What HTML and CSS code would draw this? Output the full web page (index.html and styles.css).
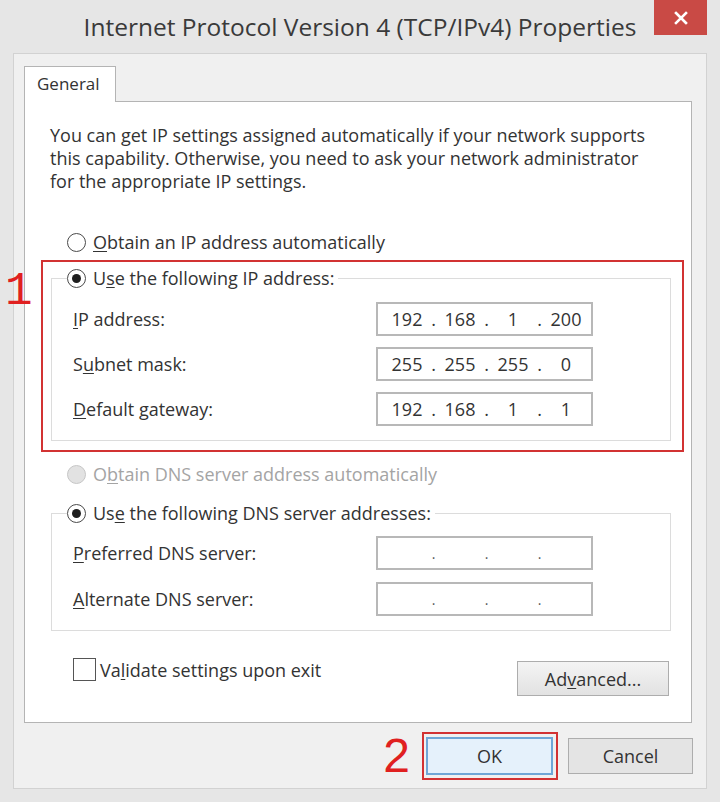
FILE: index.html
```html
<!DOCTYPE html>
<html lang="en">
<head>
    <meta charset="UTF-8">
    <title>Internet Protocol Version 4 (TCP/IPv4) Properties</title>
    <link rel="stylesheet" href="styles.css">
</head>
<body>

    <div class="window">

        <!-- Title bar -->

        <div class="titlebar">
            <span></span>
            <h1 class="title">Internet Protocol Version 4 (TCP/IPv4) Properties</h1>
            <button class="close" aria-label="Close">
                <svg width="14" height="14" viewBox="0 0 14 14">
                    <path d="M2 2 L12 12 M12 2 L2 12" stroke="#fff" stroke-width="2.6" stroke-linecap="square"/>
                </svg>
            </button>
        </div>

        <div class="client">

            <div class="tabs">
                <div class="tab">General</div>
            </div>

            <div class="panel">
                <p class="intro">
                    You can get IP settings assigned automatically if your network supports<br>
                    this capability. Otherwise, you need to ask your network administrator<br>
                    for the appropriate IP settings.
                </p>

                <!-- IP address -->

                <div class="option">
                    <span class="radio"></span>
                    <span><u>O</u>btain an IP address automatically</span>
                </div>

                <div class="highlight ip-box">
                    <span class="step step-one">1</span>
                    <fieldset class="group">
                        <legend class="option">
                            <span class="radio checked"></span>
                            <span>U<u>s</u>e the following IP address:</span>
                        </legend>
                        <div class="field">
                            <span class="label"><u>I</u>P address:</span>
                            <div class="ip-input">
                                <span class="octet">192</span><span class="dot">.</span>
                                <span class="octet">168</span><span class="dot">.</span>
                                <span class="octet">1</span><span class="dot">.</span>
                                <span class="octet">200</span>
                            </div>
                        </div>
                        <div class="field">
                            <span class="label">S<u>u</u>bnet mask:</span>
                            <div class="ip-input">
                                <span class="octet">255</span><span class="dot">.</span>
                                <span class="octet">255</span><span class="dot">.</span>
                                <span class="octet">255</span><span class="dot">.</span>
                                <span class="octet">0</span>
                            </div>
                        </div>
                        <div class="field">
                            <span class="label"><u>D</u>efault gateway:</span>
                            <div class="ip-input">
                                <span class="octet">192</span><span class="dot">.</span>
                                <span class="octet">168</span><span class="dot">.</span>
                                <span class="octet">1</span><span class="dot">.</span>
                                <span class="octet">1</span>
                            </div>
                        </div>
                    </fieldset>
                </div>

                <!-- DNS -->

                <div class="option disabled dns-auto">
                    <span class="radio"></span>
                    <span>O<u>b</u>tain DNS server address automatically</span>
                </div>

                <fieldset class="group dns-group">
                    <legend class="option">
                        <span class="radio checked"></span>
                        <span>Us<u>e</u> the following DNS server addresses:</span>
                    </legend>
                    <div class="field">
                        <span class="label"><u>P</u>referred DNS server:</span>
                        <div class="ip-input empty">
                            <span class="octet"></span><span class="dot">.</span>
                            <span class="octet"></span><span class="dot">.</span>
                            <span class="octet"></span><span class="dot">.</span>
                            <span class="octet"></span>
                        </div>
                    </div>
                    <div class="field">
                        <span class="label"><u>A</u>lternate DNS server:</span>
                        <div class="ip-input empty">
                            <span class="octet"></span><span class="dot">.</span>
                            <span class="octet"></span><span class="dot">.</span>
                            <span class="octet"></span><span class="dot">.</span>
                            <span class="octet"></span>
                        </div>
                    </div>
                </fieldset>

                <div class="panel-footer">
                    <div class="check">
                        <span class="checkbox"></span>
                        <span>Va<u>l</u>idate settings upon exit</span>
                    </div>
                    <button class="btn advanced">Ad<u>v</u>anced...</button>
                </div>
            </div>

            <!-- Buttons -->

            <div class="actions">
                <span class="step">2</span>
                <div class="highlight ok-box">
                    <button class="btn ok">OK</button>
                </div>
                <button class="btn cancel">Cancel</button>
            </div>

        </div>
    </div>

</body>
</html>
```

FILE: styles.css
```css
*{
    margin: 0;
    padding: 0;
    box-sizing: border-box;
}

body{
    background: #e2e2e2;
    font-family: "Open Sans", "Noto Sans", sans-serif;
    color: #333;
    font-size: 18px;
}

u{
    text-decoration-thickness: 1px;
    text-underline-offset: 2px;
}

.window{
    width: 720px;
    height: 802px;
    display: flex;
    flex-direction: column;
    background: #e6e6e6;
    padding: 0 13px 13px 13px;
}

/* title bar */

.titlebar{
    height: 53px;
    display: grid;
    grid-template-columns: 1fr auto 1fr;
    align-items: start;
}

.title{
    font-weight: normal;
    font-size: 24.5px;
    color: #3a3a3a;
    line-height: 53px;
    white-space: nowrap;
}

.close{
    justify-self: end;
    width: 53px;
    height: 35px;
    border: none;
    background: #c94a45;
    display: flex;
    align-items: center;
    justify-content: center;
}

/* client area */

.client{
    flex: 1;
    display: flex;
    flex-direction: column;
    background: #f0f0f0;
    border: 1px solid #d2d2d2;
    padding: 12px 13px 8px 10px;
}

.tabs{
    display: flex;
    height: 36px;
    position: relative;
    z-index: 1;
}

.tab{
    width: 92px;
    background: #fff;
    border: 1px solid #b4b4b4;
    border-bottom: none;
    padding-left: 12px;
    line-height: 34px;
    font-size: 17px;
}

.panel{
    flex: 1;
    margin-top: -1px;
    margin-right: 1px;
    background: #fff;
    border: 1px solid #b4b4b4;
    display: flex;
    flex-direction: column;
}

.intro{
    margin: 22px 10px 0 25px;
    line-height: 23px;
    white-space: nowrap;
}

/* radios */

.option{
    display: flex;
    align-items: center;
    gap: 7px;
    height: 24px;
    line-height: 24px;
}

.panel > .option{
    margin: 37px 0 0 42px;
}

.radio{
    width: 19px;
    height: 19px;
    border-radius: 50%;
    border: 1.5px solid #4a4a4a;
    background: #fff;
    display: flex;
    align-items: center;
    justify-content: center;
}

.radio.checked::after{
    content: "";
    width: 9px;
    height: 9px;
    border-radius: 50%;
    background: #1e1e1e;
}

.option.disabled{
    color: #a4a4a4;
}

.option.disabled .radio{
    border-color: #c6c6c6;
    background: #e2e2e2;
}

.panel > .dns-auto{
    margin-top: 10px;
}

/* red markers */

.highlight{
    border: 2px solid #d23232;
    position: relative;
}

.ip-box{
    margin: 6px 7px 0 16px;
    padding: 4px 11px 9px 8px;
}

.step{
    color: #e02020;
    font-family: "Liberation Mono", monospace;
    font-size: 46px;
    line-height: 40px;
}

.step-one{
    position: absolute;
    left: -38px;
    top: 10px;
}

/* group boxes */

.group{
    border: 1px solid #dcdcdc;
    padding: 0 0 14px 21px;
}

.group legend{
    margin-left: -6px;
    padding-right: 4px;
}

.dns-group{
    margin: 15px 20px 0 26px;
    padding-bottom: 14px;
}

.field{
    display: flex;
    align-items: center;
    margin-top: 11px;
}

.group legend + .field{
    margin-top: 12px;
}

.dns-group .field{
    margin-top: 12px;
}

.dns-group legend + .field{
    margin-top: 11px;
}

.label{
    width: 303px;
}

.ip-input{
    width: 217px;
    height: 34px;
    border: 2px solid #b8b8b8;
    display: flex;
    align-items: center;
    padding-left: 9px;
}

.octet{
    width: 40px;
    text-align: center;
}

.dot{
    width: 13px;
    text-align: center;
}

.empty .dot{
    font-size: 14px;
    color: #555;
}

/* bottom of the tab page */

.panel-footer{
    display: flex;
    justify-content: space-between;
    align-items: flex-start;
    margin: 27px 22px 0 48px;
}

.check{
    display: flex;
    align-items: center;
    gap: 4px;
    height: 23px;
}

.checkbox{
    width: 23px;
    height: 23px;
    border: 1.5px solid #555;
    background: #fff;
}

.btn{
    font-family: inherit;
    font-size: 18px;
    color: #333;
    border: 1px solid #adadad;
    background: #e4e4e4;
}

.advanced{
    margin-top: 3px;
    width: 152px;
    height: 35px;
    background: linear-gradient(#f4f4f4, #e2e2e2);
}

/* dialog buttons */

.actions{
    margin-top: 9px;
    height: 48px;
    display: flex;
    justify-content: flex-end;
    align-items: center;
}

.actions .step{
    margin-right: 12px;
    font-family: "Liberation Sans", sans-serif;
    font-size: 48px;
}

.ok-box{
    padding: 3px 3px 3px 2px;
}

.ok{
    width: 127px;
    height: 38px;
    background: #e5f1fb;
    border: 2px solid #6fa6d6;
}

.cancel{
    margin-left: 10px;
    width: 125px;
    height: 36px;
}
```
